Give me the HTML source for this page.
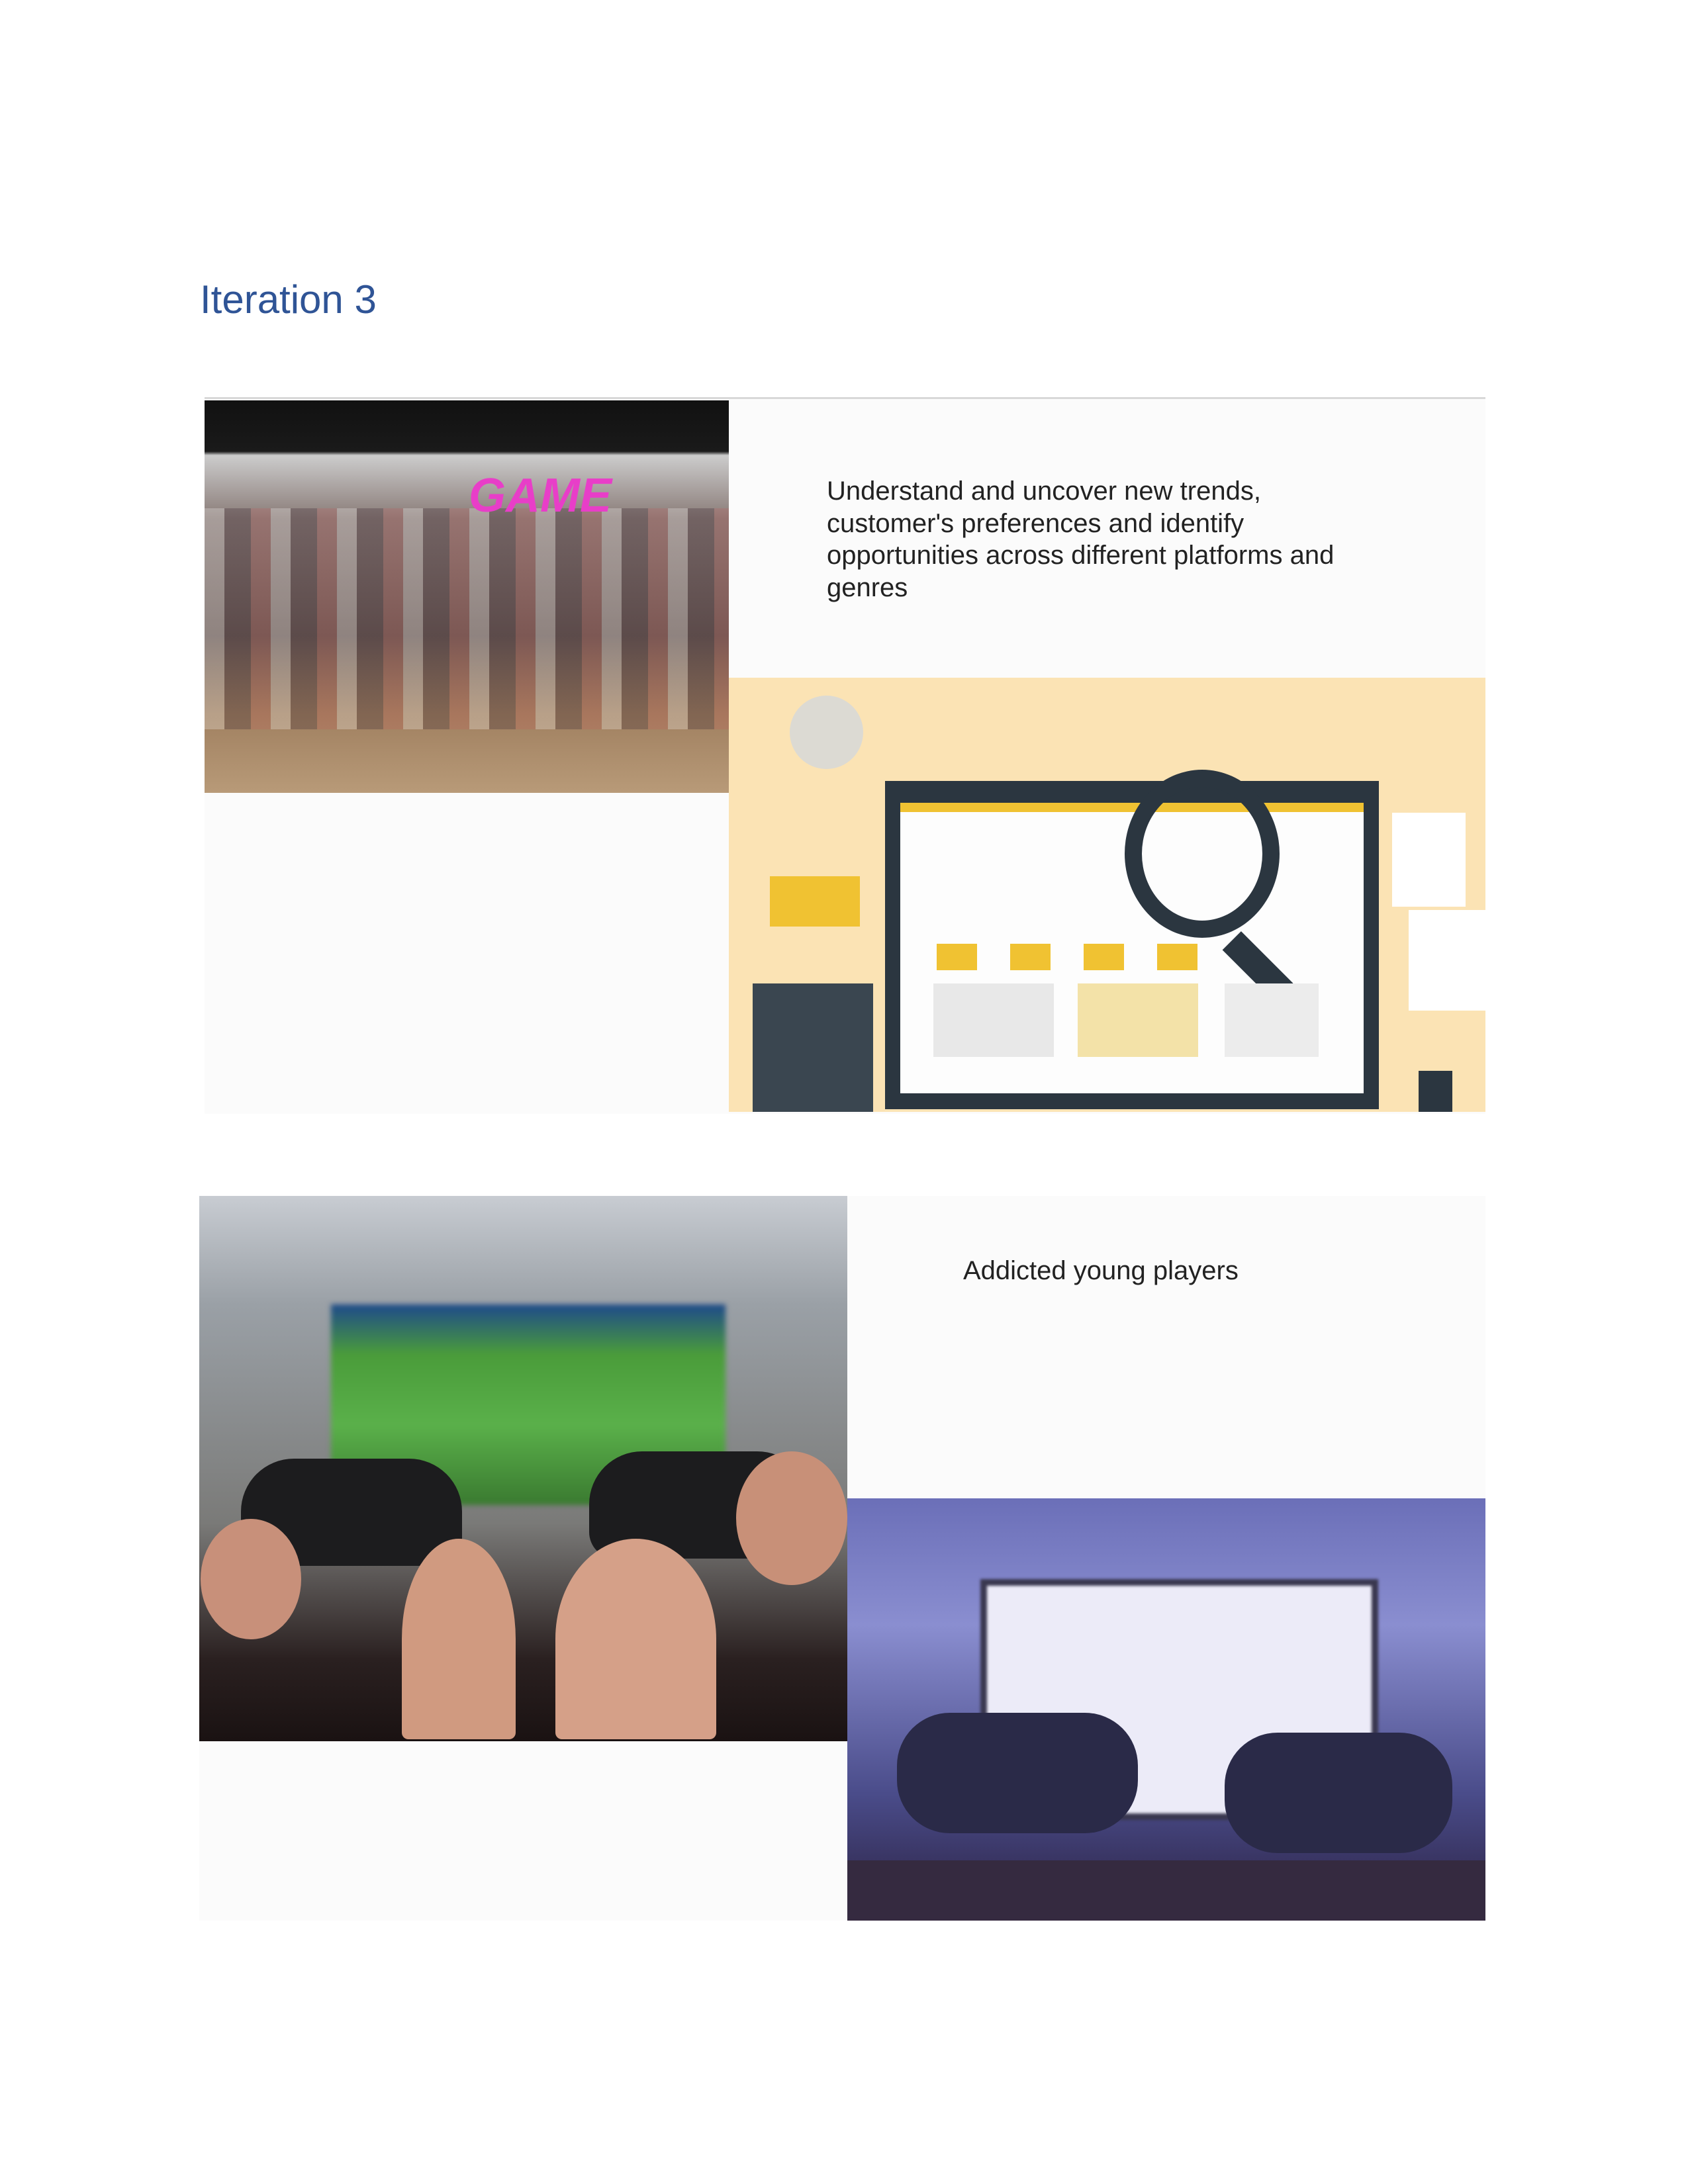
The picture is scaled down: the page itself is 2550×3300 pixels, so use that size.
<!DOCTYPE html>
<html><head><style>
body{margin:0;background:#fff;width:2550px;height:3300px;position:relative;overflow:hidden;font-family:"Liberation Sans",sans-serif}
.a{position:absolute}
</style></head><body>
<div class="a" style="left:302px;top:418px;font-size:60px;color:#2f5496">Iteration 3</div>

<!-- slide 1 -->
<div class="a" style="left:309px;top:600px;width:1935px;height:1080px;background:#fbfbfb;border-top:3px solid #d8d8d8"></div>
<div class="a" style="left:309px;top:605px;width:792px;height:593px;background:linear-gradient(180deg,#111 0%,#1a1a1a 13%,#ccc 14%,#8a7c78 30%,#6a5a55 60%,#a08060 80%,#b89a78 100%)"></div>
<div class="a" style="left:309px;top:768px;width:792px;height:334px;background:repeating-linear-gradient(90deg,rgba(255,255,255,.25) 0 30px,rgba(60,40,50,.3) 30px 70px,rgba(200,80,80,.2) 70px 100px)"></div>
<div class="a" style="left:708px;top:708px;font-size:72px;font-weight:bold;font-style:italic;color:#e83ec8">GAME</div>
<div class="a" style="left:1249px;top:718px;font-size:40px;line-height:48.5px;color:#222">Understand and uncover new trends,<br>customer's preferences and identify<br>opportunities across different platforms and<br>genres</div>
<div class="a" style="left:1101px;top:1024px;width:1143px;height:656px;background:#fbe3b4"></div>
<div class="a" style="left:1193px;top:1051px;width:111px;height:111px;border-radius:50%;background:#dcdad3"></div>
<div class="a" style="left:1337px;top:1180px;width:746px;height:496px;background:#2b3640"></div>
<div class="a" style="left:1360px;top:1213px;width:700px;height:425px;background:#fdfdfd;border-top:14px solid #f0c232"></div>
<div class="a" style="left:1699px;top:1163px;width:182px;height:202px;border:26px solid #2b3640;border-radius:50%;box-sizing:content-box"></div>
<div class="a" style="left:1880px;top:1405px;width:40px;height:111px;background:#2b3640;transform:rotate(-45deg)"></div>
<div class="a" style="left:1415px;top:1426px;width:425px;height:40px;background:repeating-linear-gradient(90deg,#f0c232 0 61px,transparent 61px 111px)"></div>
<div class="a" style="left:1410px;top:1486px;width:182px;height:111px;background:#e8e8e8"></div>
<div class="a" style="left:1628px;top:1486px;width:182px;height:111px;background:#f3e2a8"></div>
<div class="a" style="left:1850px;top:1486px;width:142px;height:111px;background:#ececec"></div>
<div class="a" style="left:1163px;top:1324px;width:136px;height:76px;background:#f0c232"></div>
<div class="a" style="left:1137px;top:1486px;width:182px;height:194px;background:#3a4650"></div>
<div class="a" style="left:2103px;top:1228px;width:111px;height:142px;background:#fff"></div>
<div class="a" style="left:2128px;top:1375px;width:116px;height:152px;background:#fff"></div>
<div class="a" style="left:2143px;top:1618px;width:51px;height:62px;background:#2b3640"></div>

<!-- slide 2 -->
<div class="a" style="left:301px;top:1807px;width:1943px;height:1095px;background:#fbfbfb"></div>
<div class="a" style="left:301px;top:1807px;width:979px;height:824px;background:linear-gradient(180deg,#c8ccd2 0%,#9aa0a6 20%,#7a7a78 60%,#2a2020 85%,#1a1212 100%)"></div>
<div class="a" style="left:500px;top:1971px;width:596px;height:303px;background:linear-gradient(180deg,#1e4a8a 0%,#4a9c3a 25%,#5ab04a 60%,#3a7a30 100%);filter:blur(4px)"></div>
<div class="a" style="left:364px;top:2204px;width:334px;height:162px;background:#1c1c1e;border-radius:80px 80px 40px 40px"></div>
<div class="a" style="left:890px;top:2193px;width:334px;height:162px;background:#1c1c1e;border-radius:80px 80px 40px 40px"></div>
<div class="a" style="left:303px;top:2295px;width:152px;height:182px;background:#c8907a;border-radius:50%"></div>
<div class="a" style="left:607px;top:2325px;width:172px;height:303px;background:#d09a80;border-radius:50% 50% 10px 10px"></div>
<div class="a" style="left:839px;top:2325px;width:243px;height:303px;background:#d5a088;border-radius:50% 50% 10px 10px"></div>
<div class="a" style="left:1112px;top:2193px;width:168px;height:202px;background:#c89078;border-radius:50%"></div>
<div class="a" style="left:1455px;top:1898px;font-size:40px;color:#222">Addicted young players</div>
<div class="a" style="left:1280px;top:2264px;width:964px;height:638px;background:linear-gradient(180deg,#6b6fb8 0%,#8a8ed0 30%,#4a4c8a 70%,#2a2040 100%)"></div>
<div class="a" style="left:1481px;top:2386px;width:581px;height:344px;background:#ecebf8;border:10px solid #3a3850;filter:blur(2px)"></div>
<div class="a" style="left:1355px;top:2588px;width:364px;height:182px;background:#2a2a48;border-radius:80px"></div>
<div class="a" style="left:1850px;top:2618px;width:344px;height:182px;background:#2a2a48;border-radius:80px"></div>
<div class="a" style="left:1280px;top:2811px;width:964px;height:91px;background:#352a40"></div>
</body></html>
